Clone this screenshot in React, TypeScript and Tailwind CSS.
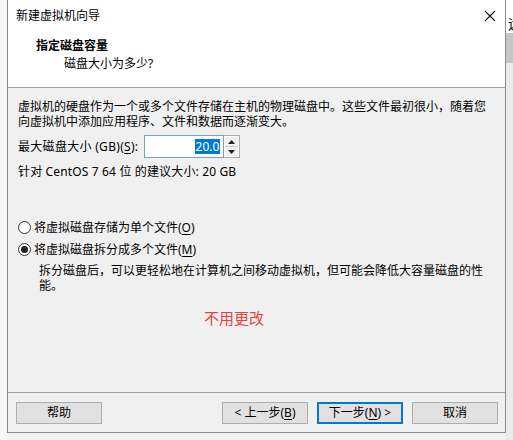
import type { ReactNode } from 'react';

const font = "font-['Noto_Sans','Noto_Sans_CJK_SC',sans-serif]";

function Key({ children }: { children: ReactNode }) {
  return <span className="underline underline-offset-2">{children}</span>;
}

function Radio({ checked, children }: { checked?: boolean; children: ReactNode }) {
  return (
    <div className="flex items-center h-[15px]">
      <span className="w-[13px] h-[13px] rounded-full border border-[#333] bg-white flex items-center justify-center shrink-0">
        {checked && <span className="w-[7px] h-[7px] rounded-full bg-[#222]" />}
      </span>
      <span className="ml-[3px] leading-[15px]">{children}</span>
    </div>
  );
}

function Btn({ children, primary, className = '' }: { children: ReactNode; primary?: boolean; className?: string }) {
  return (
    <button
      className={`w-[86px] h-[22px] bg-[#e1e1e1] text-[12px] leading-none text-black flex items-center justify-center ${
        primary ? 'border-2 border-[#0078d7]' : 'border border-[#adadad]'
      } ${className}`}
    >
      {children}
    </button>
  );
}

export default function App() {
  return (
    <div className={`w-[513px] h-[440px] flex bg-[#f2f2f2] overflow-hidden text-[12px] text-black ${font}`}>
      <div className="w-[7px] shrink-0 bg-[#f7f7f7]" />

      {/* dialog window */}
      <div className="w-[499px] h-[433px] shrink-0 border-x border-b border-[#8a8a8a] bg-[#f0f0f0] flex flex-col">
        <div className="bg-white h-[87px] flex flex-col">
          <div className="h-[31px] flex items-center justify-between pl-[8px] pr-[8px]">
            <span className="leading-none">新建虚拟机向导</span>
            <svg width="12" height="12" viewBox="0 0 12 12" className="mr-[1px]">
              <path d="M1 1 L11 11 M11 1 L1 11" stroke="#111" strokeWidth="1.1" fill="none" />
            </svg>
          </div>
          <div className="mt-[7px] pl-[28px] h-[16px] leading-[16px] font-bold">指定磁盘容量</div>
          <div className="mt-[2px] pl-[56px] h-[16px] leading-[16px]">磁盘大小为多少?</div>
        </div>
        <div className="h-px bg-[#a0a0a0]" />

        <div className="flex-1 flex flex-col pl-[10px] pr-[12px]">
          <p className="mt-[11px] leading-[15px]">
            虚拟机的硬盘作为一个或多个文件存储在主机的物理磁盘中。这些文件最初很小，随着您
            <br />
            向虚拟机中添加应用程序、文件和数据而逐渐变大。
          </p>

          <div className="mt-[6px] h-[23px] flex items-center">
            <span className="leading-[15px] tracking-[0.3px]">
              最大磁盘大小 (GB)(<Key>S</Key>):
            </span>
            <div className="ml-[6px] w-[80px] h-[23px] bg-white border border-[#7a9cd3] flex items-center justify-end pr-[3px]">
              <span className="bg-[#0078d7] text-white leading-[15px] px-px">20.0</span>
            </div>
            <div className="w-[16px] h-[23px] flex flex-col border-y border-r border-[#adadad] bg-white">
              <div className="flex-1 flex items-center justify-center bg-[#f0f0f0] border-b border-[#c8c8c8] m-px mb-0">
                <svg width="7" height="4" viewBox="0 0 7 4">
                  <path d="M0 4 L3.5 0 L7 4 Z" fill="#222" />
                </svg>
              </div>
              <div className="flex-1 flex items-center justify-center bg-[#f0f0f0] m-px mt-0">
                <svg width="7" height="4" viewBox="0 0 7 4">
                  <path d="M0 0 L3.5 4 L7 0 Z" fill="#222" />
                </svg>
              </div>
            </div>
          </div>

          <p className="mt-[6px] leading-[15px] tracking-[0.15px]">针对 CentOS 7 64 位 的建议大小: 20 GB</p>

          <div className="mt-[41px]">
            <Radio>
              将虚拟磁盘存储为单个文件(<Key>O</Key>)
            </Radio>
          </div>
          <div className="mt-[7px]">
            <Radio checked>
              将虚拟磁盘拆分成多个文件(<Key>M</Key>)
            </Radio>
          </div>
          <p className="mt-[6px] pl-[21px] leading-[15px]">
            拆分磁盘后，可以更轻松地在计算机之间移动虚拟机，但可能会降低大容量磁盘的性
            <br />
            能。
          </p>

          <p className="mt-[15px] ml-[186px] text-[15px] leading-[20px] text-[#e8423f]">不用更改</p>
        </div>

        <div className="h-px bg-[#a0a0a0]" />
        <div className="h-[39px] flex items-start pt-[9px] pl-[8px] pr-[7px]">
          <Btn>帮助</Btn>
          <div className="flex-1" />
          <Btn>
            &lt; 上一步(<Key>B</Key>)
          </Btn>
          <Btn primary className="ml-[9px]">
            下一步(<Key>N</Key>) &gt;
          </Btn>
          <Btn className="ml-[9px]">取消</Btn>
        </div>
      </div>

      {/* background strip to the right */}
      <div className="flex-1 flex flex-col bg-[#ebebeb] overflow-hidden">
        <div className="h-[33px] bg-white relative overflow-hidden">
          <span className="absolute left-[2px] top-[17px] text-[14px] leading-none">远</span>
        </div>
        <div className="h-[30px] bg-[#c6c6c6]" />
      </div>
    </div>
  );
}
